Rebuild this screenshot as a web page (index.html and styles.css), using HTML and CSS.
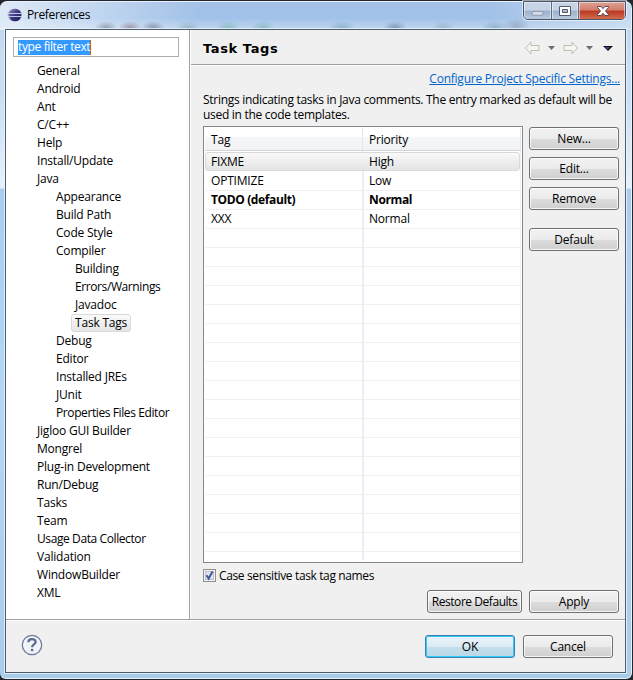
FILE: index.html
```html
<!DOCTYPE html>
<html lang="en">
<head>
<meta charset="utf-8">
<title>Preferences</title>
<link rel="stylesheet" href="styles.css">
</head>
<body>
<div class="window">
  <header class="titlebar">
    <svg class="app-icon" width="16" height="16" viewBox="0 0 16 16">
      <defs><linearGradient id="ball" x1="0" y1="0" x2="1" y2="1"><stop offset="0" stop-color="#8e8ac0"/><stop offset=".5" stop-color="#3a3580"/><stop offset="1" stop-color="#1c1a55"/></linearGradient></defs>
      <circle cx="7" cy="8" r="6.3" fill="#b9a9c9"/>
      <circle cx="8.2" cy="8" r="6.3" fill="url(#ball)"/>
      <path d="M1 6.500h14M1 9.500h14" stroke="#c3c8e6" stroke-width="1"/>
    </svg>
    <h1 class="title">Preferences</h1>
    <div class="controls">
      <span class="control min"><svg width="28" height="18" viewBox="0 0 28 18"><rect x="8.5" y="9.5" width="11" height="4" rx=".5" fill="#d3dce8" stroke="#8f9cb0"/></svg></span>
      <span class="control max"><svg width="26" height="18" viewBox="0 0 26 18"><path fill-rule="evenodd" d="M7.500 4.500h11v9h-11zM10.500 7.500v3h5v-3z" fill="#fff" stroke="#535a70"/></svg></span>
      <span class="control close"><svg width="46" height="18" viewBox="0 0 46 18"><path d="M18.500 4.500h3.500l2 2.200 2-2.200h3.500v1l-3 3.500 3 3.500v1h-3.500l-2-2.200-2 2.200h-3.500v-1l3-3.500-3-3.500z" fill="#fff" stroke="#5a4550"/></svg></span>
    </div>
  </header>
  <main class="client">
    <div class="upper">
      <nav class="sidebar">
        <div class="filter"><span class="filter-text">type filter text</span></div>
        <ul class="tree">
          <li>General</li><li>Android</li><li>Ant</li><li>C/C++</li><li>Help</li><li>Install/Update</li>
          <li>Java
            <ul>
              <li>Appearance</li><li>Build Path</li><li>Code Style</li>
              <li>Compiler
                <ul><li>Building</li><li class="tight">Errors/Warnings</li><li>Javadoc</li><li><span class="selected">Task Tags</span></li></ul>
              </li>
              <li>Debug</li><li>Editor</li><li>Installed JREs</li><li>JUnit</li><li class="tight">Properties Files Editor</li>
            </ul>
          </li>
          <li>Jigloo GUI Builder</li><li>Mongrel</li><li>Plug-in Development</li><li>Run/Debug</li><li>Tasks</li><li>Team</li><li class="tight">Usage Data Collector</li><li>Validation</li><li>WindowBuilder</li><li>XML</li>
        </ul>
      </nav>
      <section class="page">
        <div class="page-head">
          <h2 class="page-title">Task Tags</h2>
          <svg class="history" width="90" height="16" viewBox="0 0 90 16">
            <path d="M1.500 8l5.500-6v3.500h8v5h-8v3.500z" fill="#f5f4ee" stroke="#bdbdb4"/>
            <path d="M24 6h7l-3.500 4z" fill="#6d6d6d"/>
            <path d="M53.500 8l-5.500-6v3.500h-8v5h8v3.500z" fill="#f5f4ee" stroke="#bdbdb4"/>
            <path d="M62 6h7l-3.500 4z" fill="#6d6d6d"/>
            <path d="M79 6h10l-5 5z" fill="#111"/><path d="M81 7h5l-2.500 2.500z" fill="#4b3f9b"/>
          </svg>
        </div>
        <div class="page-body">
          <a class="link" href="#">Configure Project Specific Settings...</a>
          <p class="intro">Strings indicating tasks in Java comments. The entry marked as default will be<br>used in the code templates.</p>
          <div class="columns">
            <div class="table">
              <div class="row head"><span>Tag</span><span>Priority</span></div>
              <div class="row current"><span>FIXME</span><span>High</span></div>
              <div class="row"><span>OPTIMIZE</span><span>Low</span></div>
              <div class="row bold"><span>TODO (default)</span><span>Normal</span></div>
              <div class="row"><span>XXX</span><span>Normal</span></div>
              <div class="blank"></div>
            </div>
            <div class="actions">
              <button>New...</button><button>Edit...</button><button>Remove</button><button class="apart">Default</button>
            </div>
          </div>
          <label class="check"><svg width="13" height="13" viewBox="0 0 13 13"><rect x=".5" y=".5" width="12" height="12" fill="#f4f4f4" stroke="#8e8f8f"/><rect x="2.500" y="2.500" width="8" height="8" fill="#e3e6ea" stroke="#b9bec6"/><path d="M3.500 6.300l2.200 3.200 3.800-7" fill="none" stroke="#40579b" stroke-width="2"/></svg><span>Case sensitive task tag names</span></label>
          <div class="page-buttons"><button class="restore">Restore Defaults</button><button>Apply</button></div>
        </div>
      </section>
    </div>
    <footer class="footer">
      <svg class="help" width="22" height="22" viewBox="0 0 22 22"><circle cx="11" cy="11" r="9.700" fill="#f1f3f7" stroke="#66789a" stroke-width="1.200"/><path d="M7.400 8.200c0-4.200 7.200-4 7.200-.3 0 2.600-3.500 2.400-3.500 5.300" fill="none" stroke="#5a6c96" stroke-width="2.300"/><rect x="9.800" y="14.700" width="2.600" height="2.500" rx="1" fill="#5a6c96"/></svg>
      <div class="footer-buttons"><button class="ok">OK</button><button>Cancel</button></div>
    </footer>
  </main>
</div>
</body>
</html>
```
FILE: styles.css
```css
* { box-sizing: border-box; }
body {
  margin: 0;
  background: #25262b;
  font: 12px/18px "Open Sans", "Noto Sans", sans-serif;
  letter-spacing: -0.2px;
  color: #000;
}
.window {
  width: 632px;
  height: 678px;
  margin-top: 1px;
  padding: 0 6px 5px 5px;
  border: 1px solid #e6f2fd;
  border-left: 0;
  border-radius: 7px 7px 6px 6px;
  background:
    radial-gradient(ellipse 12px 7px at 106px 26px, rgba(85,100,110,.5), transparent) no-repeat,
    radial-gradient(ellipse 12px 7px at 130px 26px, rgba(120,80,95,.5), transparent) no-repeat,
    radial-gradient(ellipse 12px 7px at 153px 26px, rgba(80,90,105,.5), transparent) no-repeat,
    radial-gradient(ellipse 12px 7px at 188px 26px, rgba(80,135,125,.35), transparent) no-repeat,
    radial-gradient(ellipse 12px 7px at 228px 26px, rgba(90,165,140,.45), transparent) no-repeat,
    radial-gradient(ellipse 12px 7px at 263px 26px, rgba(90,160,150,.45), transparent) no-repeat,
    radial-gradient(ellipse 14px 7px at 342px 26px, rgba(90,140,160,.45), transparent) no-repeat,
    radial-gradient(ellipse 12px 7px at 395px 26px, rgba(60,80,130,.45), transparent) no-repeat,
    radial-gradient(ellipse 12px 7px at 443px 26px, rgba(110,135,150,.35), transparent) no-repeat,
    radial-gradient(ellipse 14px 7px at 495px 26px, rgba(80,130,150,.4), transparent) no-repeat,
    radial-gradient(ellipse 14px 8px at 516px 24px, rgba(110,120,150,.4), transparent) no-repeat,
    linear-gradient(90deg, rgba(240,246,252,.75), rgba(240,246,252,.35) 110px, transparent 200px, transparent 490px, rgba(215,230,245,.65)) 0 0 / 100% 28px no-repeat,
    linear-gradient(#a5c1e6 0, #a0c1e9 16px, #c3d8ee 28px, #c8def2 60px, #c8def2 90px, #e6f1fb 186px, #a9cdf1 187px, #b4d7f7 400px, #a9cce9 100%);
}
.titlebar { display: flex; height: 27px; padding-left: 2px; }
.app-icon { margin: 5px 4px 0 0; }
.title { margin: 4px 0 0; font-size: 12px; font-weight: 400; line-height: 18px; letter-spacing: -.35px; }
.controls {
  display: flex;
  height: 19px;
  margin: -1px -1px 0 auto;
  border: 1px solid #46546b;
  border-radius: 0 0 5px 5px;
  overflow: hidden;
  box-shadow: 0 0 0 1px rgba(255,255,255,.6);
}
.control { display: flex; height: 18px; box-shadow: inset 0 0 0 1px rgba(255,255,255,.5); }
.control + .control { border-left: 1px solid #5d6a80; }
.min, .max { background: linear-gradient(#c5d3e5 45%, #9bb0cb 50%, #bdcee1); }
.min { width: 27px; }
.close { background: linear-gradient(#dda294 0, #d47d69 45%, #b93823 50%, #d57351); }
.client {
  display: flex;
  flex-direction: column;
  width: 621px;
  height: 644px;
  border: 1px solid #4d5d6c;
  background: #f0f0f0;
  box-shadow: 0 0 0 1px rgba(235,245,255,.8);
}
.upper { display: flex; height: 590px; border-bottom: 1px solid #a0a0a0; }
.sidebar { width: 184px; padding: 7px 0 0 7px; background: #fff; border-right: 1px solid #a0a0a0; }
.filter {
  display: flex;
  width: 166px;
  height: 20px;
  padding: 2px 4px;
  border: 1px solid #abadb3;
  line-height: 14px;
}
.filter-text { width: 73px; height: 15px; background: #3399ff; color: #fff; border-right: 1px solid #cc6600; letter-spacing: -.37px; white-space: nowrap; }
ul { margin: 0; padding: 0; list-style: none; }
.tree { margin: 5px 0 0 24px; white-space: nowrap; }
.tree ul { padding-left: 19px; }
.tight { letter-spacing: -.4px; }
.selected {
  display: block;
  width: 60px;
  height: 18px;
  margin-left: -4px;
  padding-left: 3px;
  border: 1px solid #d9d9d9;
  border-radius: 3px;
  background: linear-gradient(#fafafa, #e5e5e5);
  line-height: 16px;
}
.page { flex: 1; border-left: 1px solid #fff; }
.page-head {
  display: flex;
  justify-content: space-between;
  height: 35px;
  padding: 8px 11px 0 12px;
  border-bottom: 1px solid #a0a0a0;
}
.page-title { margin: 0; font: bold 13px/22px "DejaVu Sans", sans-serif; letter-spacing: .6px; }
.history { margin-top: 2px; }
.page-body { display: flex; flex-direction: column; padding: 4px 5px 0 12px; border-top: 1px solid #fff; }
.link { align-self: flex-end; color: #0066cc; text-decoration: underline; letter-spacing: -.23px; white-space: nowrap; }
.intro { margin: 4px 0; line-height: 15px; letter-spacing: -.29px; white-space: nowrap; }
.columns { display: flex; gap: 6px; }
.table {
  display: flex;
  flex-direction: column;
  width: 320px;
  height: 437px;
  padding: 1px;
  border: 1px solid #828790;
  background: linear-gradient(#e9eff8, #e9eff8) 158px 24px / 2px 409px no-repeat, linear-gradient(#eef3fb, #eef3fb) 316px 24px / 1px 409px no-repeat, #fff;
}
.row { display: flex; height: 19px; border-bottom: 1px solid #f0f0f0; }
.row span { flex: none; width: 158px; padding-left: 6px; }
.head { height: 23px; border-bottom: 1px solid #d5d5d5; background: linear-gradient(#fff 40%, #f6f7f9 42%, #f1f2f4); line-height: 24px; }
.head span { border-right: 1px solid #e4e6ea; }
.current { height: 19px; margin: 1px 1px 1px 0; border: 1px solid #d9d9d9; border-radius: 3px; background: linear-gradient(#f9f9f9, #e4e4e4); line-height: 17px; }
.current span { width: 157px; }
.current span:first-child { padding-left: 5px; }
.bold { font-weight: 700; letter-spacing: -.38px; }
.blank { flex: 1; background: repeating-linear-gradient(transparent 0 18px, #f0f0f0 18px 19px); }
.actions { display: flex; flex-direction: column; gap: 7px; padding-top: 1px; }
button {
  width: 90px;
  height: 23px;
  padding: 0;
  border: 1px solid #707070;
  border-radius: 3px;
  background: linear-gradient(#f2f2f2, #ebebeb 50%, #dddddd 51%, #cfcfcf);
  box-shadow: inset 0 0 0 1px rgba(255,255,255,.8);
  color: #000;
  font: inherit;
  letter-spacing: inherit;
  line-height: 21px;
  white-space: nowrap;
}
.apart { margin-top: 11px; }
.check { display: flex; gap: 3px; height: 18px; margin-top: 4px; letter-spacing: -.37px; }
.check svg { margin-top: 2px; }
.page-buttons { display: flex; justify-content: flex-end; gap: 7px; margin: 5px 1px 0 0; }
.restore { width: 95px; letter-spacing: -.45px; }
.footer { display: flex; justify-content: space-between; flex: 1; padding: 14px 12px 0 15px; border-top: 1px solid #fff; }
.footer-buttons { display: flex; gap: 8px; }
.help { margin-top: -1px; }
.ok { border-color: #3c7fb1; background: linear-gradient(#eaf3f8, #dcebf4 50%, #c5deeb 51%, #b9d8e8); box-shadow: inset 0 0 0 1px #33c8f5; }
```
